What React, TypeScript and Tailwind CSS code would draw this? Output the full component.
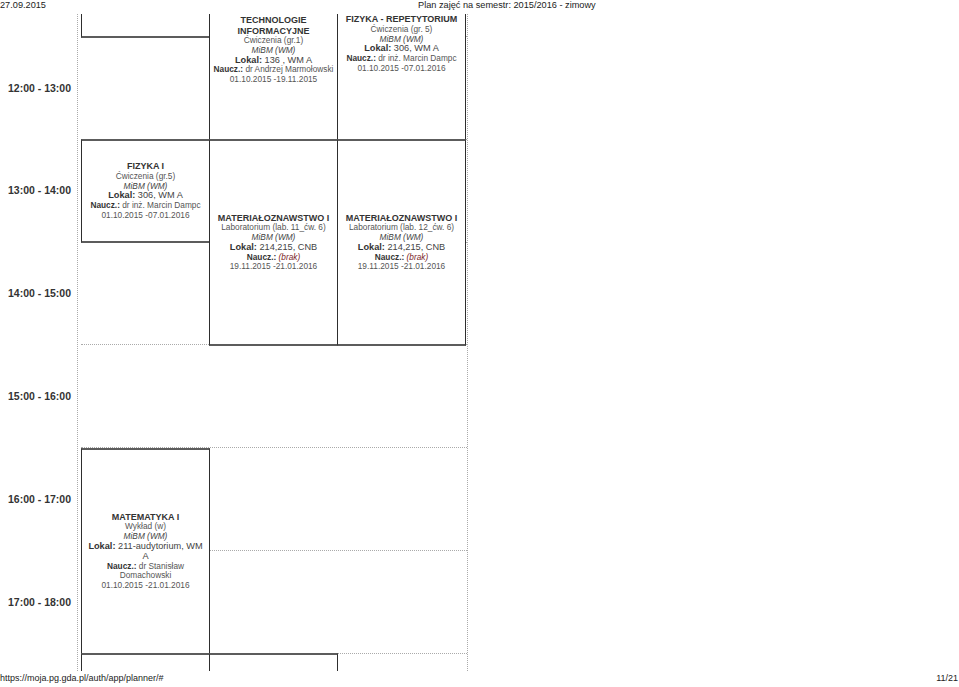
import React from "react";

function Title({ children }: { children: React.ReactNode }) {
  return <div className="whitespace-nowrap text-[9px] font-bold leading-[10.5px] text-[#333]">{children}</div>;
}
function Sub({ children }: { children: React.ReactNode }) {
  return <div className="whitespace-nowrap text-[8.3px] leading-[9.8px] text-[#555]">{children}</div>;
}
function Dept() {
  return <div className="whitespace-nowrap text-[8.3px] italic leading-[9.8px] text-[#444]">MiBM (WM)</div>;
}
function Lokal({ children }: { children: React.ReactNode }) {
  return (
    <div className="whitespace-nowrap text-[9.2px] leading-[9.8px] text-[#444]">
      <span className="font-bold text-[#333]">Lokal:</span> {children}
    </div>
  );
}
function Naucz({ children }: { children: React.ReactNode }) {
  return (
    <div className="whitespace-nowrap text-[8.3px] leading-[9.8px] text-[#555]">
      <span className="font-bold text-[#333]">Naucz.:</span> {children}
    </div>
  );
}
function Brak() {
  return <span className="italic text-[#7b2424]">(brak)</span>;
}

const blockBase =
  "absolute flex w-[129px] flex-col items-center justify-center bg-white text-center border-x border-x-[#2e2e2e] border-y-2 border-y-[#5c5c5c]";

const hours = ["12:00 - 13:00", "13:00 - 14:00", "14:00 - 15:00", "15:00 - 16:00", "16:00 - 17:00", "17:00 - 18:00"];

export default function App() {
  return (
    <div className="relative h-[687px] w-[959px] overflow-hidden bg-white font-['Liberation_Sans',Arial,sans-serif] text-[#222]">
      {/* header */}
      <div className="flex h-[14px] text-[9.2px] leading-[10px] text-[#222]">
        <span className="w-[418px]">27.09.2015</span>
        <span>Plan zajęć na semestr: 2015/2016 - zimowy</span>
      </div>

      {/* timetable */}
      <div className="flex h-[657px] overflow-hidden">
        {/* time labels */}
        <div className="flex w-[77px] shrink-0 flex-col">
          <div className="h-[23px] shrink-0" />
          {hours.map((h) => (
            <div key={h} className="flex h-[102.8px] shrink-0 items-center justify-end pr-[6px]">
              <span className="whitespace-nowrap text-[10.5px] font-bold text-[#333]">{h}</span>
            </div>
          ))}
        </div>

        {/* day column */}
        <div className="relative h-full w-[391px] shrink-0 border-l border-dotted border-[#aaa] pl-[3px]">
          <div className="flex h-full flex-col border-r border-dotted border-[#aaa]">
            <div className="h-[23px] shrink-0 border-b border-dotted border-[#aaa]" />
            <div className="h-[102.8px] shrink-0 border-b border-dotted border-[#aaa]" />
            <div className="h-[102.8px] shrink-0 border-b border-dotted border-[#aaa]" />
            <div className="h-[102.8px] shrink-0 border-b border-dotted border-[#aaa]" />
            <div className="h-[102.8px] shrink-0 border-b border-dotted border-[#aaa]" />
            <div className="h-[102.8px] shrink-0 border-b border-dotted border-[#aaa]" />
            <div className="h-[102.8px] shrink-0 border-b border-dotted border-[#aaa]" />
            <div className="h-[102.8px] shrink-0" />
          </div>

          {/* empty block top-left */}
          <div className={`${blockBase} left-[3px] top-[-54px] h-[78px]`} />

          {/* TECHNOLOGIE INFORMACYJNE */}
          <div className={`${blockBase} left-[131px] top-[-55px] h-[182px]`}>
            <Title>TECHNOLOGIE</Title>
            <Title>INFORMACYJNE</Title>
            <Sub>Ćwiczenia (gr.1)</Sub>
            <Dept />
            <Lokal>136 , WM A</Lokal>
            <Naucz>dr Andrzej Marmołowski</Naucz>
            <Sub>01.10.2015 -19.11.2015</Sub>
          </div>

          {/* FIZYKA - REPETYTORIUM */}
          <div className={`${blockBase} left-[259px] top-[-67px] h-[194px]`}>
            <Title>FIZYKA - REPETYTORIUM</Title>
            <Sub>Ćwiczenia (gr. 5)</Sub>
            <Dept />
            <Lokal>306, WM A</Lokal>
            <Naucz>dr inż. Marcin Dampc</Naucz>
            <Sub>01.10.2015 -07.01.2016</Sub>
          </div>

          {/* FIZYKA I */}
          <div className={`${blockBase} left-[3px] top-[125px] h-[104px]`}>
            <Title>FIZYKA I</Title>
            <Sub>Ćwiczenia (gr.5)</Sub>
            <Dept />
            <Lokal>306, WM A</Lokal>
            <Naucz>dr inż. Marcin Dampc</Naucz>
            <Sub>01.10.2015 -07.01.2016</Sub>
          </div>

          {/* MATERIAŁOZNAWSTWO I (lab 11) */}
          <div className={`${blockBase} left-[131px] top-[125px] h-[207px]`}>
            <Title>MATERIAŁOZNAWSTWO I</Title>
            <Sub>Laboratorium (lab. 11_ćw. 6)</Sub>
            <Dept />
            <Lokal>214,215, CNB</Lokal>
            <Naucz>
              <Brak />
            </Naucz>
            <Sub>19.11.2015 -21.01.2016</Sub>
          </div>

          {/* MATERIAŁOZNAWSTWO I (lab 12) */}
          <div className={`${blockBase} left-[259px] top-[125px] h-[207px]`}>
            <Title>MATERIAŁOZNAWSTWO I</Title>
            <Sub>Laboratorium (lab. 12_ćw. 6)</Sub>
            <Dept />
            <Lokal>214,215, CNB</Lokal>
            <Naucz>
              <Brak />
            </Naucz>
            <Sub>19.11.2015 -21.01.2016</Sub>
          </div>

          {/* MATEMATYKA I */}
          <div className={`${blockBase} left-[3px] top-[434px] h-[207px]`}>
            <Title>MATEMATYKA I</Title>
            <Sub>Wykład (w)</Sub>
            <Dept />
            <Lokal>211-audytorium, WM</Lokal>
            <div className="text-[9.2px] leading-[9.8px] text-[#444]">A</div>
            <Naucz>dr Stanisław</Naucz>
            <Sub>Domachowski</Sub>
            <Sub>01.10.2015 -21.01.2016</Sub>
          </div>

          {/* bottom blocks (cut off) */}
          <div className={`${blockBase} left-[3px] top-[639px] h-[60px]`} />
          <div className={`${blockBase} left-[131px] top-[639px] h-[60px]`} />
        </div>
      </div>

      {/* footer */}
      <div className="flex h-[16px] items-start justify-between pt-[2px] text-[9px] leading-[10px] text-[#222]">
        <span>https://moja.pg.gda.pl/auth/app/planner/#</span>
        <span className="pr-[1px]">11/21</span>
      </div>
    </div>
  );
}
